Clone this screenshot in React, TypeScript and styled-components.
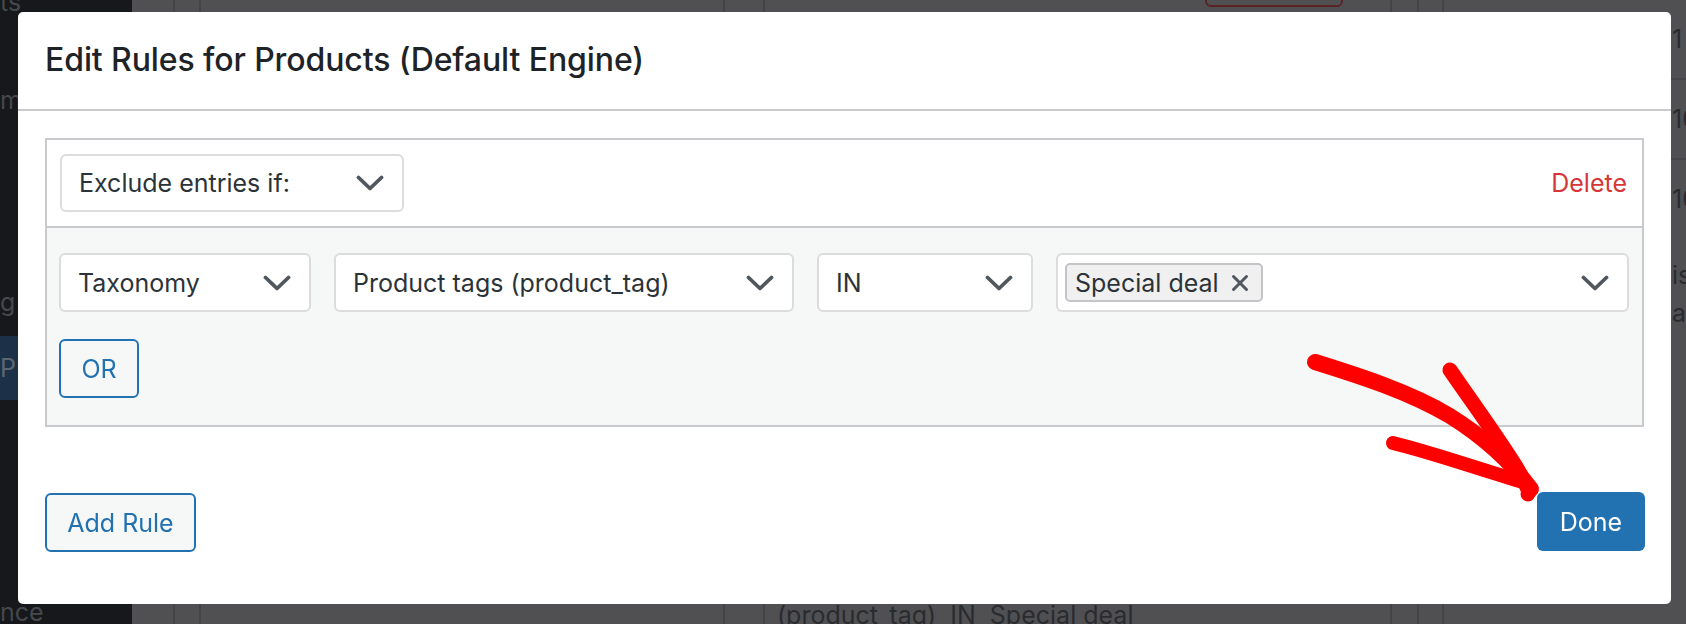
import styled, { createGlobalStyle } from "styled-components"

const GlobalStyle = createGlobalStyle`
  html, body {
    margin: 0;
    padding: 0;
    background: #505053;
    overflow: hidden;
  }
  * { box-sizing: border-box; }
`

const Page = styled.div`
  display: flex;
  width: 1686px;
  height: 624px;
  font-family: Inter, "Noto Sans", sans-serif;
  overflow: hidden;
`

const Sidebar = styled.div`
  width: 132px;
  flex-shrink: 0;
  background: #16181b;
  display: flex;
  flex-direction: column;
`

const MenuItem = styled.div<{ $top: number; $active?: boolean }>`
  margin-top: ${p => p.$top}px;
  height: ${p => (p.$active ? 64 : 32)}px;
  line-height: ${p => (p.$active ? 64 : 32)}px;
  font-size: 25px;
  color: ${p => (p.$active ? "#5b6673" : "#45484c")};
  background: ${p => (p.$active ? "#1c3148" : "transparent")};
  white-space: nowrap;
`

const Content = styled.div`
  flex: 1;
  display: flex;
  background: #505053;
`

const Col = styled.div<{ $w: number }>`
  width: ${p => p.$w}px;
  flex-shrink: 0;
  border-left: 2px solid #434446;
  display: flex;
  flex-direction: column;
  &:first-child { border-left: none; }
`

const BottomText = styled.div`
  margin-top: auto;
  margin-bottom: -6px;
  padding-left: 12px;
  font-size: 25px;
  line-height: 30px;
  color: #2a2b2e;
  white-space: pre;
`

const GhostButton = styled.div`
  margin: -40px 0 0 440px;
  width: 138px;
  height: 47px;
  border: 2px solid #5a2224;
  border-radius: 6px;
`

const RightRow = styled.div<{ $h: number }>`
  height: ${p => p.$h}px;
  border-bottom: 2px solid #46474a;
  padding-left: 228px;
  display: flex;
  align-items: center;
  font-size: 25px;
  color: #2a2b2e;
  white-space: nowrap;
`

const RightText = styled.div`
  padding: 20px 0 0 228px;
  font-size: 25px;
  line-height: 38px;
  color: #2a2b2e;
  white-space: nowrap;
`

const Modal = styled.div`
  position: fixed;
  left: 18px;
  top: 12px;
  width: 1653px;
  height: 592px;
  background: #fff;
  border-radius: 5px;
  display: flex;
  flex-direction: column;
  color: #1d2327;
`

const ModalHeader = styled.div`
  height: 99px;
  border-bottom: 2px solid #c9cacd;
  display: flex;
  align-items: center;
  padding: 0 27px 2px;
`

const Title = styled.h1`
  margin: 0;
  font-size: 32px;
  font-weight: 500;
  letter-spacing: -0.1px;
  color: #1d2327;
`

const ModalBody = styled.div`
  padding: 27px 27px 0;
`

const RuleBox = styled.div`
  border: 2px solid #c9cacd;
  height: 289px;
  display: flex;
  flex-direction: column;
`

const RuleTop = styled.div`
  height: 88px;
  padding: 0 15px 0 13px;
  display: flex;
  align-items: center;
  justify-content: space-between;
  border-bottom: 2px solid #c9cacd;
`

const Conditions = styled.div`
  flex: 1;
  background: #f6f7f7;
  padding: 25px 13px 0 12px;
  display: flex;
  flex-direction: column;
  gap: 27px;
`

const SelectRow = styled.div`
  display: flex;
  gap: 23px;
`

const Select = styled.div<{ $w: number; $h?: number }>`
  width: ${p => p.$w}px;
  height: ${p => p.$h ?? 59}px;
  background: #fff;
  border: 2px solid #dcdcde;
  border-radius: 6px;
  display: flex;
  align-items: center;
  justify-content: space-between;
  padding: 0 18px 0 17px;
  font-size: 25px;
  color: #2c3338;
  white-space: nowrap;
`

const TagSelect = styled(Select)`
  padding-left: 7px;
`

const Tag = styled.div`
  height: 39px;
  display: flex;
  align-items: center;
  gap: 12px;
  padding: 0 12px 0 8px;
  background: #f0f0f1;
  border: 2px solid #c3c4c7;
  border-radius: 5px;
  font-size: 25px;
  color: #2c3338;
`

const DeleteLink = styled.span`
  font-size: 25px;
  color: #d63638;
`

const OutlineButton = styled.button<{ $w: number }>`
  width: ${p => p.$w}px;
  height: 59px;
  padding: 0;
  background: #f6f7f7;
  border: 2px solid #2271b1;
  border-radius: 6px;
  color: #2271b1;
  font-family: inherit;
  font-size: 25px;
`

const Footer = styled.div`
  margin-top: auto;
  height: 111px;
  padding: 0 26px 0 27px;
  display: flex;
  justify-content: space-between;
  align-items: flex-start;
`

const PrimaryButton = styled.button`
  width: 108px;
  height: 59px;
  margin-top: -1px;
  padding: 0;
  background: #2271b1;
  border: none;
  border-radius: 6px;
  color: #fff;
  font-family: inherit;
  font-size: 25px;
`

const Arrow = styled.svg`
  position: absolute;
  left: 1272px;
  top: 328px;
  pointer-events: none;
`

function Chevron() {
  return (
    <svg width="28" height="16" viewBox="0 0 28 16">
      <path d="M2.5 2.5 L14 13.5 L25.5 2.5" fill="none" stroke="#50575e" strokeWidth="3.8" strokeLinecap="round" strokeLinejoin="round" />
    </svg>
  )
}

function Cross() {
  return (
    <svg width="18" height="18" viewBox="0 0 18 18">
      <path d="M2.5 2.5 L15.5 15.5 M15.5 2.5 L2.5 15.5" stroke="#50575e" strokeWidth="3" strokeLinecap="round" />
    </svg>
  )
}

export default function App() {
  return (
    <>
      <GlobalStyle />
      <Page>
        <Sidebar>
          <MenuItem $top={-14}>ts</MenuItem>
          <MenuItem $top={66}>m</MenuItem>
          <MenuItem $top={170}>g</MenuItem>
          <MenuItem $top={18} $active>P</MenuItem>
          <MenuItem $top={196}>nce</MenuItem>
        </Sidebar>
        <Content>
          <Col $w={41} />
          <Col $w={26} />
          <Col $w={524} />
          <Col $w={40} />
          <Col $w={627}>
            <GhostButton />
            <BottomText>{"(product_tag)  IN  Special deal"}</BottomText>
          </Col>
          <Col $w={27} />
          <Col $w={25} />
          <Col $w={244}>
            <RightRow $h={80}>1</RightRow>
            <RightRow $h={80}>10</RightRow>
            <RightText>
              10<br />
              <br />
              is<br />
              ar
            </RightText>
          </Col>
        </Content>

        <Modal>
          <ModalHeader>
            <Title>Edit Rules for Products (Default Engine)</Title>
          </ModalHeader>
          <ModalBody>
            <RuleBox>
              <RuleTop>
                <Select $w={344} $h={58}>
                  Exclude entries if:
                  <Chevron />
                </Select>
                <DeleteLink>Delete</DeleteLink>
              </RuleTop>
              <Conditions>
                <SelectRow>
                  <Select $w={252}>
                    Taxonomy
                    <Chevron />
                  </Select>
                  <Select $w={460}>
                    Product tags (product_tag)
                    <Chevron />
                  </Select>
                  <Select $w={216}>
                    IN
                    <Chevron />
                  </Select>
                  <TagSelect $w={573}>
                    <Tag>
                      Special deal
                      <Cross />
                    </Tag>
                    <Chevron />
                  </TagSelect>
                </SelectRow>
                <OutlineButton $w={80}>OR</OutlineButton>
              </Conditions>
            </RuleBox>
          </ModalBody>
          <Footer>
            <OutlineButton $w={151}>Add Rule</OutlineButton>
            <PrimaryButton>Done</PrimaryButton>
          </Footer>
          <Arrow width="270" height="170" viewBox="0 0 270 170">
            <g fill="none" stroke="#ff0000" strokeLinecap="round" strokeLinejoin="round">
              <path d="M25 22 C 70 36, 120 52, 160 76 C 192 96, 218 118, 241 149" strokeWidth="16" />
              <path d="M160 30 C 182 62, 214 106, 228 130 C 236 144, 240 152, 238 154" strokeWidth="15" />
              <path d="M103 103 C 140 112, 186 128, 236 143" strokeWidth="14" />
            </g>
          </Arrow>
        </Modal>
      </Page>
    </>
  )
}
